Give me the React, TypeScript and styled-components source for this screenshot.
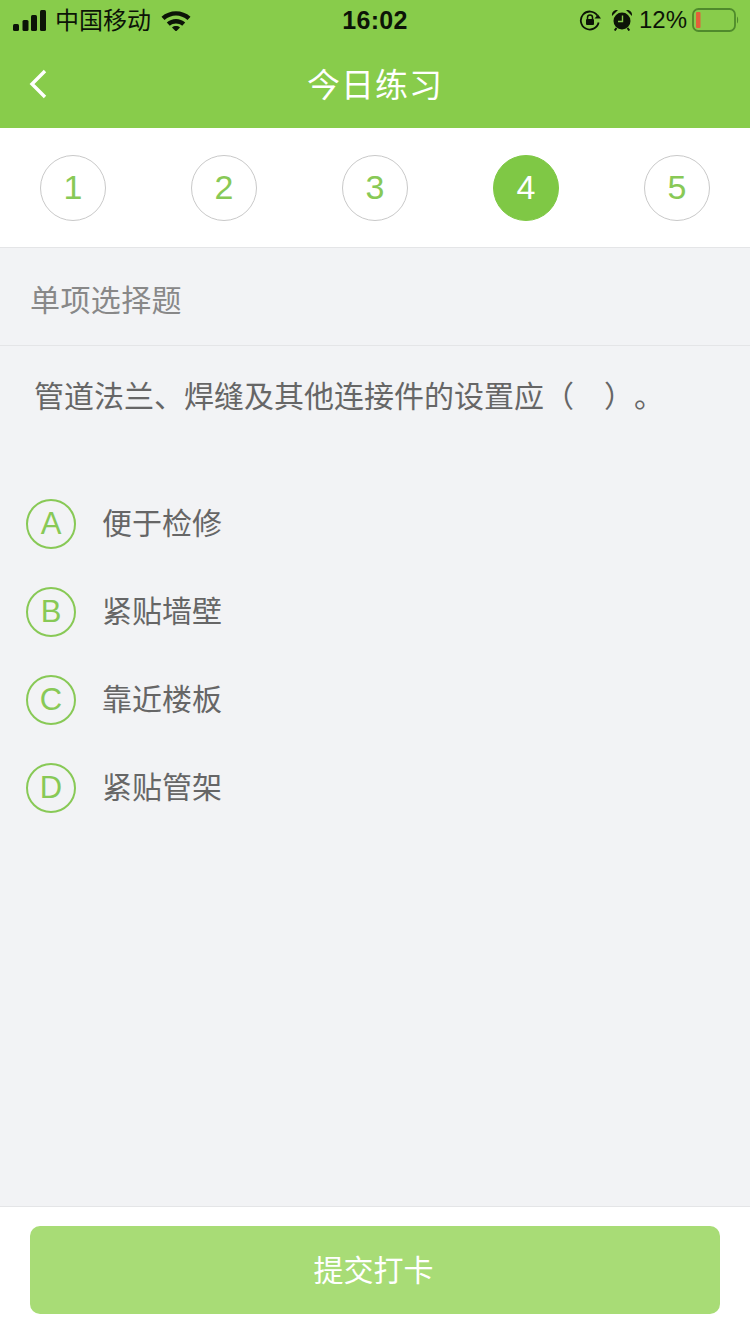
import React from 'react';
import styled, { createGlobalStyle } from 'styled-components';

const GlobalStyle = createGlobalStyle`
  html, body {
    margin: 0;
    padding: 0;
    background: #f2f3f5;
  }
  * {
    box-sizing: border-box;
  }
`;

const FONT = `"Liberation Sans", "Noto Sans CJK SC", sans-serif`;

const steps = [1, 2, 3, 4, 5];
const options = [
  { key: 'A', text: '便于检修' },
  { key: 'B', text: '紧贴墙壁' },
  { key: 'C', text: '靠近楼板' },
  { key: 'D', text: '紧贴管架' },
];

const App: React.FC = () => (
  <Page>
    <GlobalStyle />
    <Header>
      <StatusBar>
        <StatusLeft>
          <svg width="33" height="21" viewBox="0 0 33 21">
            <rect x="0" y="14" width="6" height="7" rx="1.5" fill="#0c1407" />
            <rect x="9.500" y="10" width="6" height="11" rx="1.5" fill="#0c1407" />
            <rect x="18" y="5" width="6" height="16" rx="1.5" fill="#0c1407" />
            <rect x="27" y="0" width="6" height="21" rx="1.5" fill="#0c1407" />
          </svg>
          <Carrier>中国移动</Carrier>
          <svg width="30" height="22" viewBox="0 0 30 22">
            <path d="M.500 7.800C8.500 .4 21.500 .4 29.500 7.800l-3 3.200C19.800 5 10.200 5 3.500 11z" fill="#0c1407" />
            <path d="M5.800 13.500C10.800 8.800 19.200 8.800 24.200 13.500l-3 3.200c-3.500-3-9-3-12.400 0z" fill="#0c1407" />
            <path d="M11 18.500c2.300-1.900 5.700-1.900 8 0L15 22.500z" fill="#0c1407" />
          </svg>
        </StatusLeft>
        <Clock>16:02</Clock>
        <StatusRight>
          <svg width="22" height="22" viewBox="0 0 22 22">
            <path d="M18.300 6.500A9 9 0 1 0 19.600 13.500" fill="none" stroke="#0c1407" strokeWidth="1.800" />
            <path d="M22 9.500h-6.500l3.500-4z" fill="#0c1407" />
            <rect x="7" y="10" width="8" height="6" rx="1" fill="#0c1407" />
            <path d="M8.500 10V8.500a2.500 2.500 0 0 1 5 0V10" fill="none" stroke="#0c1407" strokeWidth="1.500" />
          </svg>
          <AlarmIcon width="22" height="22" viewBox="0 0 22 22">
            <circle cx="11" cy="12" r="8.500" fill="#0c1407" />
            <path d="M11.500 6.500v6H7" fill="none" stroke="#88cc4b" strokeWidth="1.400" />
            <path d="M1 7C.500 3 3 .500 7 1zM21 7C21.500 3 19 .500 15 1z" fill="#0c1407" />
            <path d="M5.500 19l-1.800 2.500M16.500 19l1.800 2.500" stroke="#0c1407" strokeWidth="2" />
          </AlarmIcon>
          <Battery>12%</Battery>
          <svg width="47" height="24" viewBox="0 0 47 24">
            <rect x="1" y="1" width="42" height="22" rx="5.500" fill="none" stroke="#4f8a2c" strokeWidth="1.800" />
            <rect x="4" y="4" width="4.500" height="16" rx="1" fill="#e2603a" />
            <path d="M45 8.500c1.500 .5 1.500 6.500 0 7z" fill="#4f8a2c" />
          </svg>
        </StatusRight>
      </StatusBar>
      <NavBar>
        <BackButton>
          <svg width="22" height="34" viewBox="0 0 22 34">
            <path d="M18 4L5 17l13 13" fill="none" stroke="#fff" strokeWidth="3.400" />
          </svg>
        </BackButton>
        <Title>今日练习</Title>
      </NavBar>
    </Header>

    <Steps>
      {steps.map((n) => (
        <Step key={n} $active={n === 4}>
          {n}
        </Step>
      ))}
    </Steps>

    <Main>
      <Kind>单项选择题</Kind>
      <Question>管道法兰、焊缝及其他连接件的设置应（　）。</Question>
      <OptionList>
        {options.map((o) => (
          <Option key={o.key}>
            <OptionMark>{o.key}</OptionMark>
            <OptionText>{o.text}</OptionText>
          </Option>
        ))}
      </OptionList>
    </Main>

    <Footer>
      <SubmitButton>提交打卡</SubmitButton>
    </Footer>
  </Page>
);

const Page = styled.div`
  width: 750px;
  height: 1334px;
  display: flex;
  flex-direction: column;
  background: #f2f3f5;
  font-family: ${FONT};
  overflow: hidden;
`;

const Header = styled.header`
  height: 128px;
  background: #88cc4b;
  display: flex;
  flex-direction: column;
`;

const StatusBar = styled.div`
  height: 40px;
  padding: 0 11px 0 13px;
  display: flex;
  align-items: center;
  justify-content: space-between;
  position: relative;
`;

const StatusLeft = styled.div`
  display: flex;
  align-items: center;
  gap: 9px;
`;

const StatusRight = styled.div`
  display: flex;
  align-items: center;
  gap: 6px;
`;

const AlarmIcon = styled.svg`
  margin-left: 4px;
`;

const Carrier = styled.span`
  font-size: 24px;
  line-height: 24px;
  padding-top: 1px;
  margin-right: 1px;
  color: #0c1407;
`;

const Clock = styled.span`
  position: absolute;
  left: 0;
  right: 0;
  text-align: center;
  font-size: 25px;
  font-weight: 700;
  letter-spacing: 0.3px;
  color: #0c1407;
`;

const Battery = styled.span`
  font-size: 24px;
  margin-right: -1px;
  color: #0c1407;
`;

const NavBar = styled.div`
  flex: 1;
  display: flex;
  align-items: center;
  justify-content: center;
  position: relative;
  padding-bottom: 2px;
`;

const BackButton = styled.div`
  position: absolute;
  left: 27px;
  top: 27px;
  display: flex;
`;

const Title = styled.h1`
  margin: 0;
  font-size: 33px;
  font-weight: 400;
  letter-spacing: 1px;
  color: #fff;
`;

const Steps = styled.div`
  height: 120px;
  padding: 0 40px;
  background: #fff;
  border-bottom: 1px solid #e4e5e7;
  display: flex;
  align-items: center;
  justify-content: space-between;
`;

const Step = styled.div<{ $active?: boolean }>`
  width: 66px;
  height: 66px;
  border-radius: 50%;
  display: flex;
  align-items: center;
  justify-content: center;
  font-size: 34px;
  color: ${(p) => (p.$active ? '#fff' : '#88c956')};
  background: ${(p) => (p.$active ? '#7fc845' : '#fff')};
  border: 1px solid ${(p) => (p.$active ? '#7fc845' : '#c9c9c9')};
`;

const Main = styled.main`
  flex: 1;
  display: flex;
  flex-direction: column;
`;

const Kind = styled.div`
  height: 98px;
  padding: 3px 0 0 30px;
  display: flex;
  align-items: center;
  border-bottom: 1px solid #e4e5e7;
  font-size: 30px;
  letter-spacing: 0.4px;
  color: #888;
`;

const Question = styled.div`
  padding: 30px 34px 0;
  font-size: 30px;
  line-height: 42px;
  text-spacing-trim: space-all;
  color: #666;
  white-space: nowrap;
`;

const OptionList = styled.div`
  margin-top: 81px;
  padding-left: 26px;
  display: flex;
  flex-direction: column;
  gap: 38px;
`;

const Option = styled.div`
  display: flex;
  align-items: center;
  gap: 26px;
`;

const OptionMark = styled.div`
  width: 50px;
  height: 50px;
  border-radius: 50%;
  border: 2px solid #88c956;
  display: flex;
  align-items: center;
  justify-content: center;
  font-size: 31px;
  color: #88c956;
`;

const OptionText = styled.span`
  font-size: 30px;
  line-height: 36px;
  color: #666;
`;

const Footer = styled.footer`
  height: 128px;
  padding: 19px 30px 0;
  background: #fff;
  border-top: 1px solid #e4e5e7;
`;

const SubmitButton = styled.div`
  height: 88px;
  padding: 0 3px 4px 0;
  border-radius: 10px;
  background: #a8dc76;
  display: flex;
  align-items: center;
  justify-content: center;
  font-size: 30px;
  color: #fff;
`;

export default App;
